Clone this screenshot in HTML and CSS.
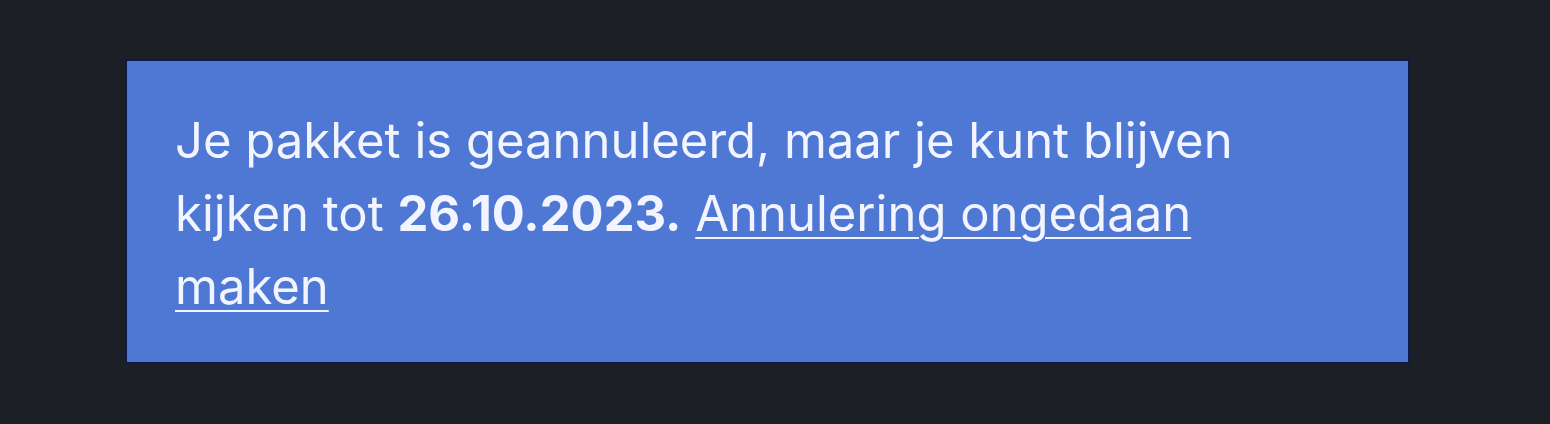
FILE: index.html
```html
<!DOCTYPE html>
<html lang="nl">
<head>
<meta charset="utf-8">
<link rel="stylesheet" href="styles.css">
</head>
<body>
<div class="page">
  <div class="notice">
    <p class="notice-text">Je pakket is geannuleerd, maar je kunt blijven kijken tot <strong>26.10.2023.</strong> <a class="notice-link" href="#">Annulering ongedaan maken</a></p>
  </div>
</div>
</body>
</html>
```
FILE: styles.css
```css
html, body {
  margin: 0;
  padding: 0;
  background: #1d1f27;
}
.page {
  padding: 61px 142px 62px 127px;
}
.notice {
  background: #4f77d4;
  box-shadow: 0 0 0 2px #0b1a4a;
  padding: 43px 48px 39px 48px;
  height: 301px;
  box-sizing: border-box;
}
.notice-text {
  margin: 0;
  max-width: 1120px;
  font-family: Inter, Lato, sans-serif;
  font-size: 49px;
  line-height: 73px;
  color: #f2f5ff;
}
.notice-text strong {
  font-weight: 700;
}
.notice-link {
  color: #f2f5ff;
  text-decoration: underline;
  text-decoration-thickness: 2px;
  text-underline-offset: 6px;
}
```
